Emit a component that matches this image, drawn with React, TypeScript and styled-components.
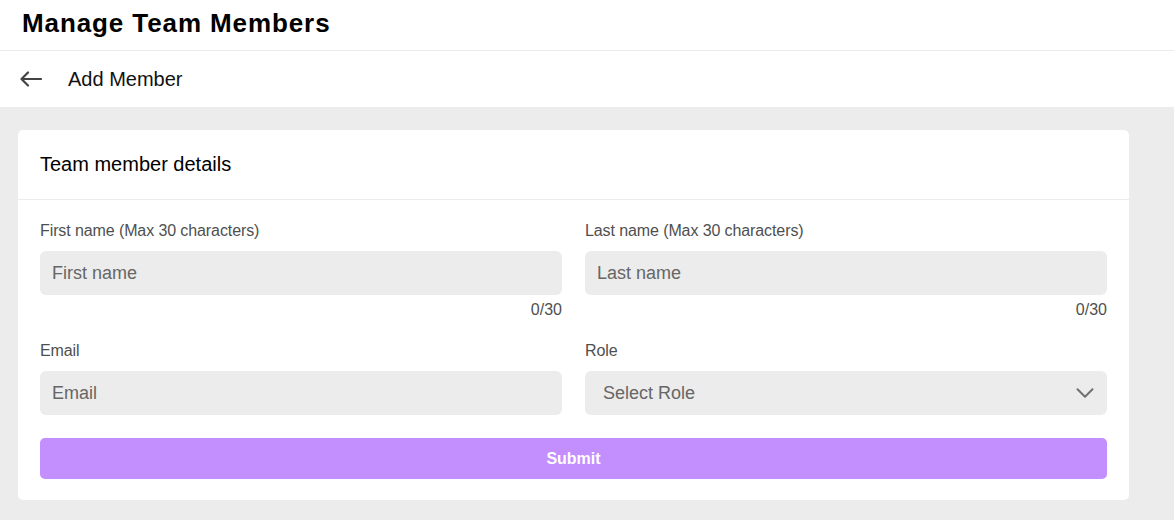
import React, { useState } from "react";
import styled, { createGlobalStyle } from "styled-components";
import { ChevronDown } from "lucide-react";

const Global = createGlobalStyle`
  * { box-sizing: border-box; }
  body {
    margin: 0;
    font-family: "Liberation Sans", Arial, sans-serif;
    background: #ececec;
  }
`;

function BackArrow() {
  return (
    <svg width="22" height="16" viewBox="0 0 22 16" fill="none">
      <path
        d="M21 8H1.5M8 1.5L1.5 8L8 14.5"
        stroke="#444"
        strokeWidth="2.2"
        strokeLinecap="round"
        strokeLinejoin="round"
      />
    </svg>
  );
}

export default function App() {
  const [first, setFirst] = useState("");
  const [last, setLast] = useState("");
  const [email, setEmail] = useState("");

  return (
    <>
      <Global />
      <Page>
        <TopBar>
          <PageTitle>Manage Team Members</PageTitle>
        </TopBar>
        <SubBar>
          <BackBtn aria-label="Back">
            <BackArrow />
          </BackBtn>
          <SubTitle>Add Member</SubTitle>
        </SubBar>

        <Content>
          <Card>
            <CardHeader>Team member details</CardHeader>
            <CardBody>
              <Grid>
                <Field>
                  <Label>First name (Max 30 characters)</Label>
                  <Input
                    placeholder="First name"
                    maxLength={30}
                    value={first}
                    onChange={(e) => setFirst(e.target.value)}
                  />
                  <Counter>{first.length}/30</Counter>
                </Field>
                <Field>
                  <Label>Last name (Max 30 characters)</Label>
                  <Input
                    placeholder="Last name"
                    maxLength={30}
                    value={last}
                    onChange={(e) => setLast(e.target.value)}
                  />
                  <Counter>{last.length}/30</Counter>
                </Field>
                <Field>
                  <Label>Email</Label>
                  <Input
                    placeholder="Email"
                    value={email}
                    onChange={(e) => setEmail(e.target.value)}
                  />
                </Field>
                <Field>
                  <Label>Role</Label>
                  <SelectBox>
                    <span>Select Role</span>
                    <ChevronDown size={30} strokeWidth={1.6} color="#707070" />
                  </SelectBox>
                </Field>
              </Grid>
              <Submit>Submit</Submit>
            </CardBody>
          </Card>
        </Content>
      </Page>
    </>
  );
}

const Page = styled.div`
  min-height: 520px;
  background: #ececec;
`;

const TopBar = styled.div`
  height: 51px;
  background: #fff;
  border-bottom: 1px solid #ebebeb;
  display: flex;
  align-items: center;
  padding: 0 22px 4px;
`;

const PageTitle = styled.h1`
  margin: 0;
  font-size: 26px;
  letter-spacing: 0.9px;
  font-weight: 700;
  color: #000;
`;

const SubBar = styled.div`
  height: 56px;
  background: #fff;
  display: flex;
  align-items: center;
  padding: 0 20px;
  gap: 26px;
`;

const BackBtn = styled.button`
  border: none;
  background: none;
  padding: 0;
  display: flex;
  cursor: pointer;
`;

const SubTitle = styled.div`
  font-size: 20px;
  color: #111;
`;

const Content = styled.div`
  padding: 23px 45px 20px 18px;
`;

const Card = styled.div`
  background: #fff;
  border-radius: 5px;
`;

const CardHeader = styled.div`
  height: 70px;
  display: flex;
  align-items: center;
  padding: 0 22px;
  font-size: 20px;
  color: #000;
  border-bottom: 1px solid #ececec;
`;

const CardBody = styled.div`
  padding: 22px 22px 21px;
`;

const Grid = styled.div`
  display: grid;
  grid-template-columns: 1fr 1fr;
  column-gap: 23px;
  row-gap: 23px;
`;

const Field = styled.div`
  display: flex;
  flex-direction: column;
`;

const Label = styled.label`
  font-size: 16px;
  line-height: 18px;
  letter-spacing: -0.1px;
  color: #4f4f4f;
  margin-bottom: 11px;
`;

const Input = styled.input`
  height: 44px;
  border: none;
  border-radius: 6px;
  background: #ececec;
  padding: 0 12px;
  font-family: inherit;
  font-size: 18px;
  color: #222;
  outline: none;

  &::placeholder {
    color: #666;
  }
`;

const Counter = styled.div`
  text-align: right;
  font-size: 16px;
  line-height: 18px;
  margin-top: 6px;
  color: #4f4f4f;
`;

const SelectBox = styled.div`
  height: 44px;
  border-radius: 6px;
  background: #ececec;
  padding: 0 7px 0 18px;
  display: flex;
  align-items: center;
  justify-content: space-between;
  font-size: 18px;
  color: #666;
  cursor: pointer;
`;

const Submit = styled.button`
  width: 100%;
  height: 41px;
  margin-top: 23px;
  border: none;
  border-radius: 5px;
  background: #c38efd;
  color: #fff;
  font-family: inherit;
  font-size: 16px;
  font-weight: 700;
  cursor: pointer;
`;
